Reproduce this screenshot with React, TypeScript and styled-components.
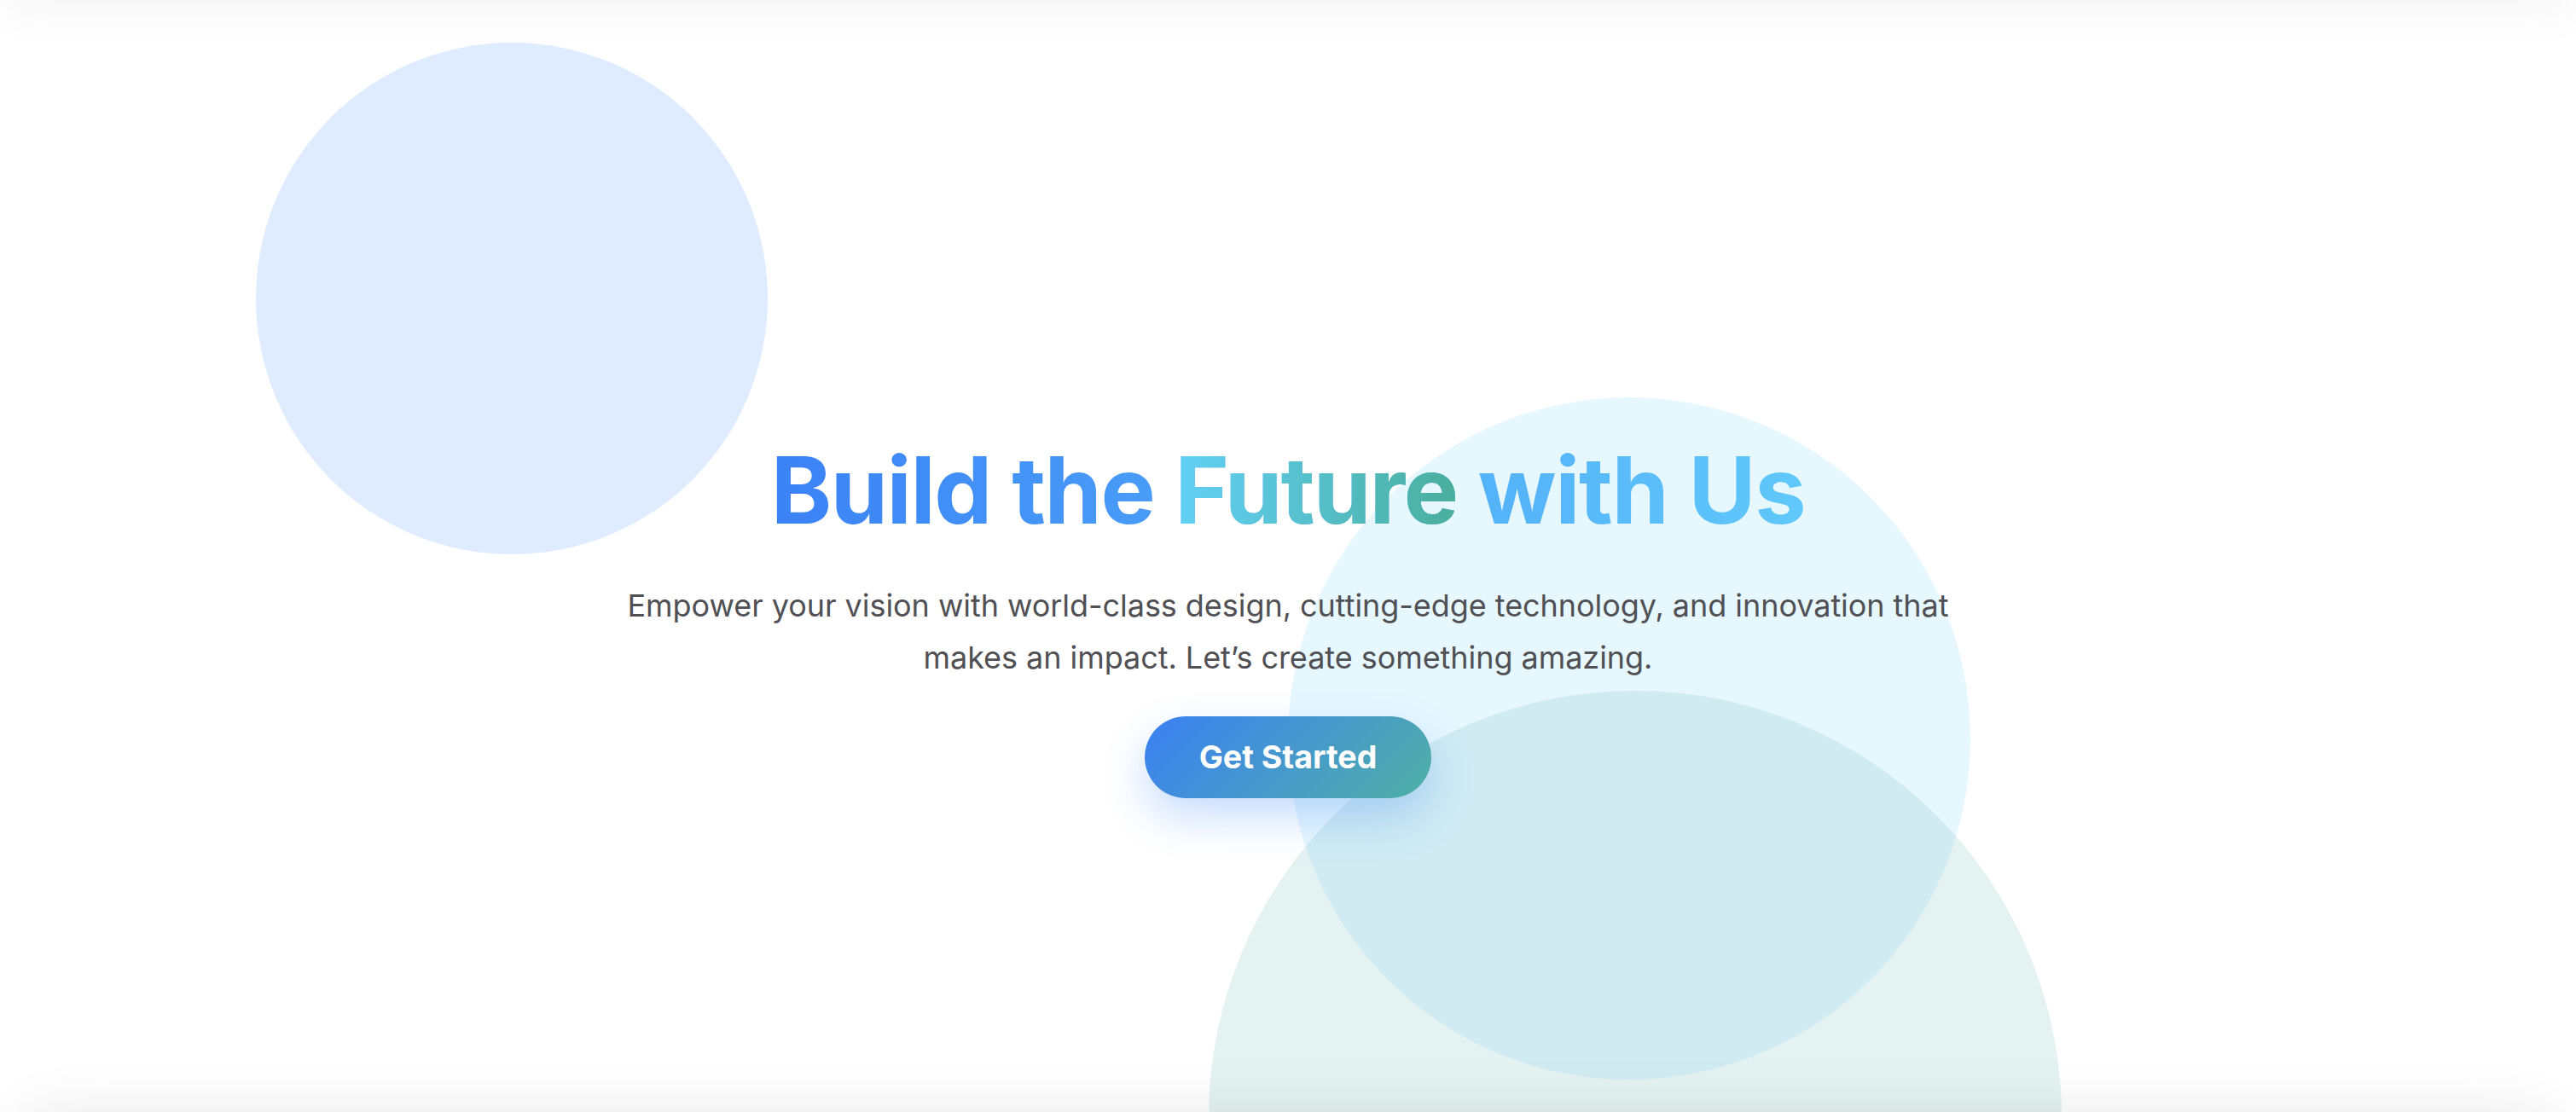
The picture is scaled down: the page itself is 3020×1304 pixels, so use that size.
import React from "react";
import styled, { createGlobalStyle } from "styled-components";

const GlobalStyle = createGlobalStyle`
  html, body {
    margin: 0;
    padding: 0;
    background: #ffffff;
  }
  body {
    font-family: Inter, "Noto Sans", "Liberation Sans", sans-serif;
    -webkit-font-smoothing: antialiased;
  }
  * { box-sizing: border-box; }
`;

const Hero = styled.section`
  position: relative;
  height: 100vh;
  min-height: 1304px;
  overflow: hidden;
  display: flex;
  flex-direction: column;
  align-items: center;
  justify-content: center;
  padding-top: 142px;
  background: #ffffff;
`;

const Decor = styled.div`
  position: absolute;
  inset: 0;
  z-index: 0;
  pointer-events: none;
`;

const Blob = styled.div<{ $size: number; $left: number; $top: number; $color: string }>`
  position: absolute;
  left: ${(p) => p.$left}px;
  top: ${(p) => p.$top}px;
  width: ${(p) => p.$size}px;
  height: ${(p) => p.$size}px;
  border-radius: 50%;
  background: ${(p) => p.$color};
`;

const TopShade = styled.div`
  position: absolute;
  left: 0;
  right: 0;
  top: -20px;
  height: 20px;
  box-shadow: 0 0 60px rgba(0, 0, 0, 0.11);
  z-index: 3;
`;

const BottomShade = styled.div`
  position: absolute;
  left: 0;
  right: 0;
  top: 100%;
  height: 300px;
  border-radius: 80px 80px 0 0;
  box-shadow: 0 0 70px rgba(0, 0, 0, 0.09);
  z-index: 3;
`;

const Content = styled.div`
  position: relative;
  z-index: 2;
  display: flex;
  flex-direction: column;
  align-items: center;
  text-align: center;
`;

const Title = styled.h1`
  margin: 0;
  font-family: Inter, "Noto Sans", sans-serif;
  font-weight: 700;
  font-size: 108px;
  line-height: 1.2;
  letter-spacing: -1.4px;
  background: linear-gradient(90deg, #3b82f6 0%, #60c8fa 100%);
  -webkit-background-clip: text;
  background-clip: text;
  color: transparent;
  -webkit-text-fill-color: transparent;
`;

const Accent = styled.span`
  background: linear-gradient(90deg, #62d0f6 0%, #4aae9c 100%);
  -webkit-background-clip: text;
  background-clip: text;
  color: transparent;
  -webkit-text-fill-color: transparent;
`;

const Lead = styled.p`
  margin: 40px 0 0;
  max-width: 1600px;
  font-family: Inter, "Noto Sans", sans-serif;
  font-weight: 400;
  font-size: 36px;
  line-height: 1.7;
  letter-spacing: -0.05px;
  color: #505055;
`;

const CTA = styled.button`
  margin-top: 38px;
  height: 96px;
  padding: 0 64px;
  border: none;
  border-radius: 48px;
  background: linear-gradient(135deg, #3b80f4 0%, #50b0a4 100%);
  color: #ffffff;
  font-family: Inter, "Noto Sans", sans-serif;
  font-weight: 700;
  font-size: 37.5px;
  line-height: 1;
  cursor: pointer;
  box-shadow: 0 22px 50px rgba(59, 130, 246, 0.28);
`;

export default function App() {
  return (
    <>
      <GlobalStyle />
      <Hero>
        <Decor>
          <Blob $size={600} $left={300} $top={50} $color="rgba(59, 130, 246, 0.16)" />
          <Blob $size={1000} $left={1417} $top={810} $color="rgba(68, 162, 162, 0.14)" />
          <Blob $size={800} $left={1510} $top={466} $color="rgba(56, 189, 248, 0.12)" />
        </Decor>
        <TopShade />
        <Content>
          <Title>
            Build the <Accent>Future</Accent> with Us
          </Title>
          <Lead>
            Empower your vision with world-class design, cutting-edge technology, and innovation that
            makes an impact. Let’s create something amazing.
          </Lead>
          <CTA type="button">Get Started</CTA>
        </Content>
        <BottomShade />
      </Hero>
    </>
  );
}
